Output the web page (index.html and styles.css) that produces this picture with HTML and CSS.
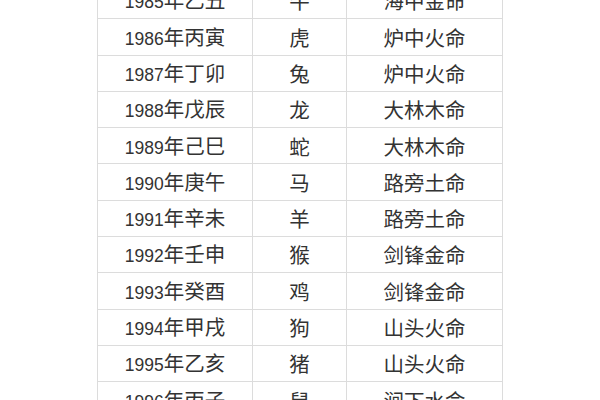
FILE: index.html
```html
<!DOCTYPE html>
<html lang="zh">
<head>
<meta charset="utf-8">
<title>生肖纳音表</title>
<link rel="stylesheet" href="styles.css">
</head>
<body>
<div class="page">
  <table class="nayin">
    <colgroup>
      <col class="c-year"><col class="c-animal"><col class="c-fate">
    </colgroup>
    <tbody>
      <tr><td><span class="num">1985</span>年乙丑</td><td>牛</td><td>海中金命</td></tr>
      <tr><td><span class="num">1986</span>年丙寅</td><td>虎</td><td>炉中火命</td></tr>
      <tr><td><span class="num">1987</span>年丁卯</td><td>兔</td><td>炉中火命</td></tr>
      <tr><td><span class="num">1988</span>年戊辰</td><td>龙</td><td>大林木命</td></tr>
      <tr><td><span class="num">1989</span>年己巳</td><td>蛇</td><td>大林木命</td></tr>
      <tr><td><span class="num">1990</span>年庚午</td><td>马</td><td>路旁土命</td></tr>
      <tr><td><span class="num">1991</span>年辛未</td><td>羊</td><td>路旁土命</td></tr>
      <tr><td><span class="num">1992</span>年壬申</td><td>猴</td><td>剑锋金命</td></tr>
      <tr><td><span class="num">1993</span>年癸酉</td><td>鸡</td><td>剑锋金命</td></tr>
      <tr><td><span class="num">1994</span>年甲戌</td><td>狗</td><td>山头火命</td></tr>
      <tr><td><span class="num">1995</span>年乙亥</td><td>猪</td><td>山头火命</td></tr>
      <tr><td><span class="num">1996</span>年丙子</td><td>鼠</td><td>涧下水命</td></tr>
    </tbody>
  </table>
</div>
</body>
</html>
```
FILE: styles.css
```css
html, body {
  margin: 0;
  padding: 0;
  background: #ffffff;
}
.page {
  width: 600px;
  height: 400px;
  overflow: hidden;
  display: flex;
  justify-content: center;
  align-items: flex-start;
}
.nayin {
  margin-top: -18px;
  border-collapse: collapse;
  table-layout: fixed;
  width: 405px;
  font-family: "Noto Sans CJK SC", "Noto Sans", sans-serif;
  font-size: 20.5px;
  color: #333333;
}
.c-year { width: 155px; }
.c-animal { width: 94px; }
.c-fate { width: 156px; }
.nayin tr {
  height: 36.3px;
}
.nayin td {
  border: 1px solid #dcdcdc;
  padding: 0;
  text-align: center;
  vertical-align: middle;
  line-height: 1;
  white-space: nowrap;
}
.num {
  font-family: "Liberation Sans", Arial, sans-serif;
  font-size: 17.5px;
}
```
